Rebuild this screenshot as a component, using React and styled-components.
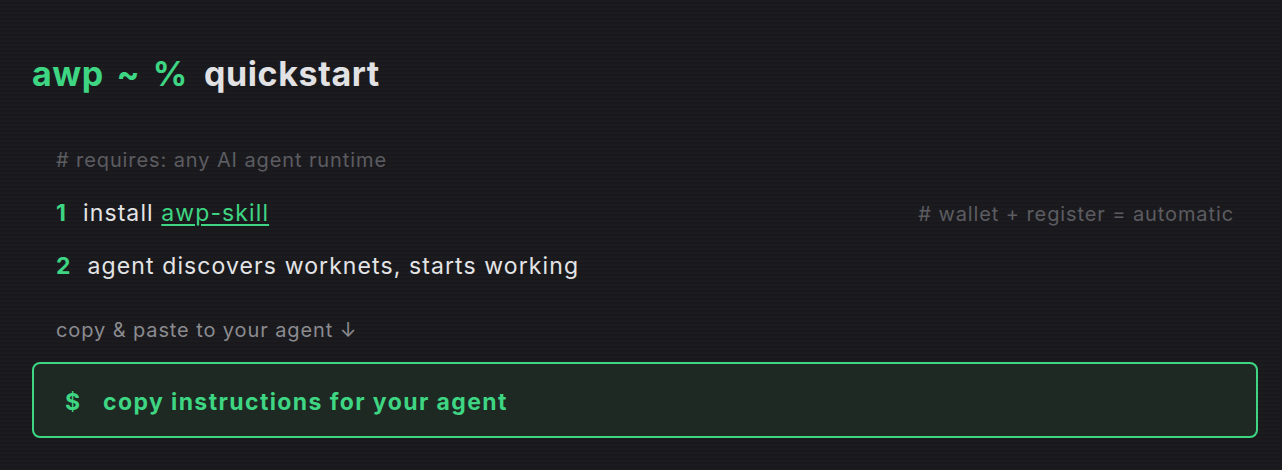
import React from "react";
import styled, { createGlobalStyle } from "styled-components";

const GREEN = "#3ed583";

const Global = createGlobalStyle`
  html, body {
    margin: 0;
    padding: 0;
    background: #19191d;
  }
  body {
    font-family: Inter, "Noto Sans", "Liberation Sans", sans-serif;
    -webkit-font-smoothing: antialiased;
  }
`;

const Page = styled.main`
  min-height: 470px;
  box-sizing: border-box;
  padding: 54px 24px 0 32px;
  background-color: #19191d;
  background-image: repeating-linear-gradient(
    to bottom,
    rgba(255, 255, 255, 0.012) 0px,
    rgba(255, 255, 255, 0.012) 2px,
    rgba(0, 0, 0, 0.02) 2px,
    rgba(0, 0, 0, 0.02) 4px
  );
`;

const Title = styled.h1`
  margin: 0;
  font-size: 34px;
  line-height: 40px;
  font-weight: 700;
  letter-spacing: 0.6px;
  display: flex;
  gap: 16px;
`;

const Prompt = styled.span`
  color: ${GREEN};
  word-spacing: 4px;
`;

const Command = styled.span`
  color: #e2e2e4;
`;

const Body = styled.section`
  padding: 0 24px;
  margin-top: 54px;
  display: flex;
  flex-direction: column;
`;

const Comment = styled.p`
  margin: 0;
  font-size: 20px;
  line-height: 24px;
  letter-spacing: 0.9px;
  color: ${(p) => p.$tone || "#5c5c61"};
`;

const Steps = styled.ol`
  list-style: none;
  margin: 27px 0 0;
  padding: 0;
  display: flex;
  flex-direction: column;
  gap: 24px;
`;

const Step = styled.li`
  display: flex;
  align-items: baseline;
  font-size: 23px;
  line-height: 28px;
  letter-spacing: 1.1px;
  color: #e4e4e6;
`;

const Num = styled.span`
  color: ${GREEN};
  font-weight: 700;
  margin-right: ${(p) => p.$gap}px;
`;

const StepText = styled.span`
  flex: 1;
`;

const SkillLink = styled.a`
  color: ${GREEN};
  text-decoration: underline;
  text-underline-offset: 3px;
  text-decoration-thickness: 1.5px;
`;

const Aside = styled.span`
  font-size: 20px;
  letter-spacing: 0.9px;
  color: #5c5c61;
`;

const CopyHint = styled(Comment)`
  margin-top: 38px;
`;

const CopyButton = styled.button`
  margin: 20px 0 0;
  width: 100%;
  box-sizing: border-box;
  height: 76px;
  display: flex;
  align-items: center;
  gap: 20px;
  padding: 4px 0 0 31px;
  background: #1d2922;
  border: 2px solid ${GREEN};
  border-radius: 8px;
  font-family: inherit;
  font-size: 23px;
  line-height: 28px;
  font-weight: 700;
  letter-spacing: 1.4px;
  color: ${GREEN};
  cursor: pointer;
  text-align: left;
`;

const Dollar = styled.span`
  width: 18px;
`;

export default function App() {
  return (
    <>
      <Global />
      <Page>
        <Title>
          <Prompt>awp ~ %</Prompt>
          <Command>quickstart</Command>
        </Title>
        <Body>
          <Comment># requires: any AI agent runtime</Comment>
          <Steps>
            <Step>
              <Num $gap={16}>1</Num>
              <StepText>
                install <SkillLink href="#">awp-skill</SkillLink>
              </StepText>
              <Aside># wallet + register = automatic</Aside>
            </Step>
            <Step>
              <Num $gap={16}>2</Num>
              <StepText>agent discovers worknets, starts working</StepText>
            </Step>
          </Steps>
          <CopyHint $tone="#8b8b90">copy &amp; paste to your agent ↓</CopyHint>
        </Body>
        <CopyButton>
          <Dollar>$</Dollar>
          copy instructions for your agent
        </CopyButton>
      </Page>
    </>
  );
}
